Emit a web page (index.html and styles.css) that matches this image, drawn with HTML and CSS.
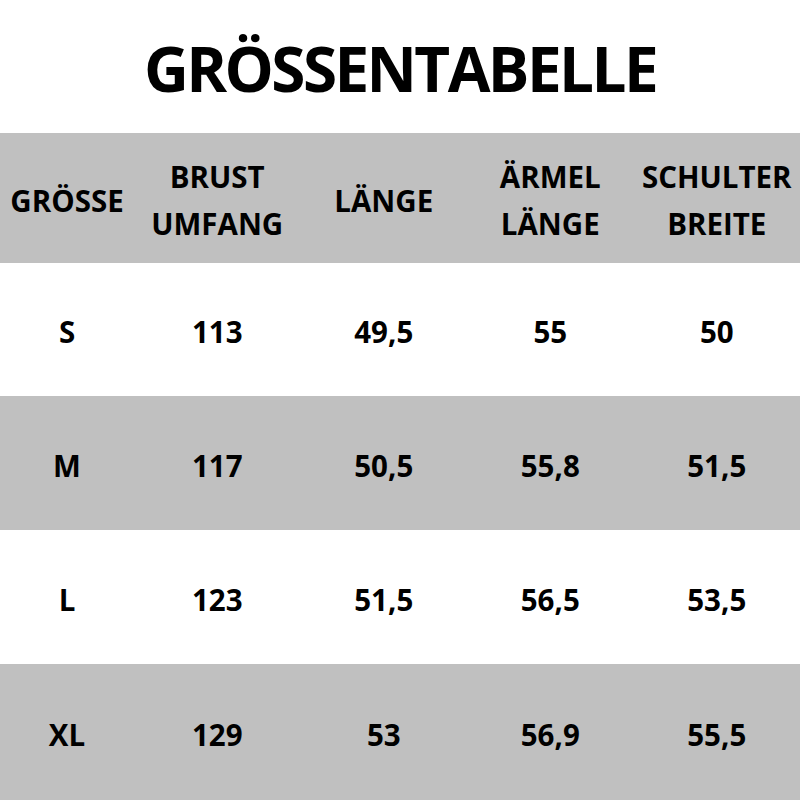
FILE: index.html
```html
<!DOCTYPE html>
<html lang="de">
<head>
<meta charset="utf-8">
<title>Größentabelle</title>
<link rel="stylesheet" href="styles.css">
</head>
<body>
<div class="page">
  <h1 class="title">GRÖSSENTABELLE</h1>
  <div class="table">
    <div class="row head">
      <div class="cell">GRÖSSE</div>
      <div class="cell">BRUST<br>UMFANG</div>
      <div class="cell">LÄNGE</div>
      <div class="cell">ÄRMEL<br>LÄNGE</div>
      <div class="cell">SCHULTER<br>BREITE</div>
    </div>
    <div class="row white r1">
      <div class="cell">S</div>
      <div class="cell">113</div>
      <div class="cell">49,5</div>
      <div class="cell">55</div>
      <div class="cell">50</div>
    </div>
    <div class="row gray r2">
      <div class="cell">M</div>
      <div class="cell">117</div>
      <div class="cell">50,5</div>
      <div class="cell">55,8</div>
      <div class="cell">51,5</div>
    </div>
    <div class="row white r3">
      <div class="cell">L</div>
      <div class="cell">123</div>
      <div class="cell">51,5</div>
      <div class="cell">56,5</div>
      <div class="cell">53,5</div>
    </div>
    <div class="row gray r4">
      <div class="cell">XL</div>
      <div class="cell">129</div>
      <div class="cell">53</div>
      <div class="cell">56,9</div>
      <div class="cell">55,5</div>
    </div>
  </div>
</div>
</body>
</html>
```
FILE: styles.css
```css
html, body {
  margin: 0;
  padding: 0;
  background: #ffffff;
}

.page {
  width: 800px;
  height: 800px;
  display: flex;
  flex-direction: column;
  font-family: "Open Sans", "Liberation Sans", sans-serif;
  font-weight: 700;
  color: #000000;
}

.title {
  height: 133px;
  margin: 0;
  display: flex;
  align-items: center;
  justify-content: center;
  font-size: 62px;
  font-weight: 700;
  letter-spacing: -2.6px;
  line-height: 1;
  padding-top: 2px;
  box-sizing: border-box;
}

.table {
  display: flex;
  flex-direction: column;
  flex: 1;
}

.row {
  display: grid;
  grid-template-columns: 134px repeat(4, 1fr);
  font-size: 29.5px;
}

.head {
  height: 130px;
  background: #c0c0c0;
  line-height: 47px;
}

.r1 { height: 133px; }
.r2 { height: 134px; }
.r3 { height: 134px; }
.r4 { flex: 1; }

.white { background: #ffffff; }
.gray { background: #c0c0c0; }

.cell {
  display: flex;
  align-items: center;
  justify-content: center;
  text-align: center;
  padding-top: 4px;
  box-sizing: border-box;
}
```
